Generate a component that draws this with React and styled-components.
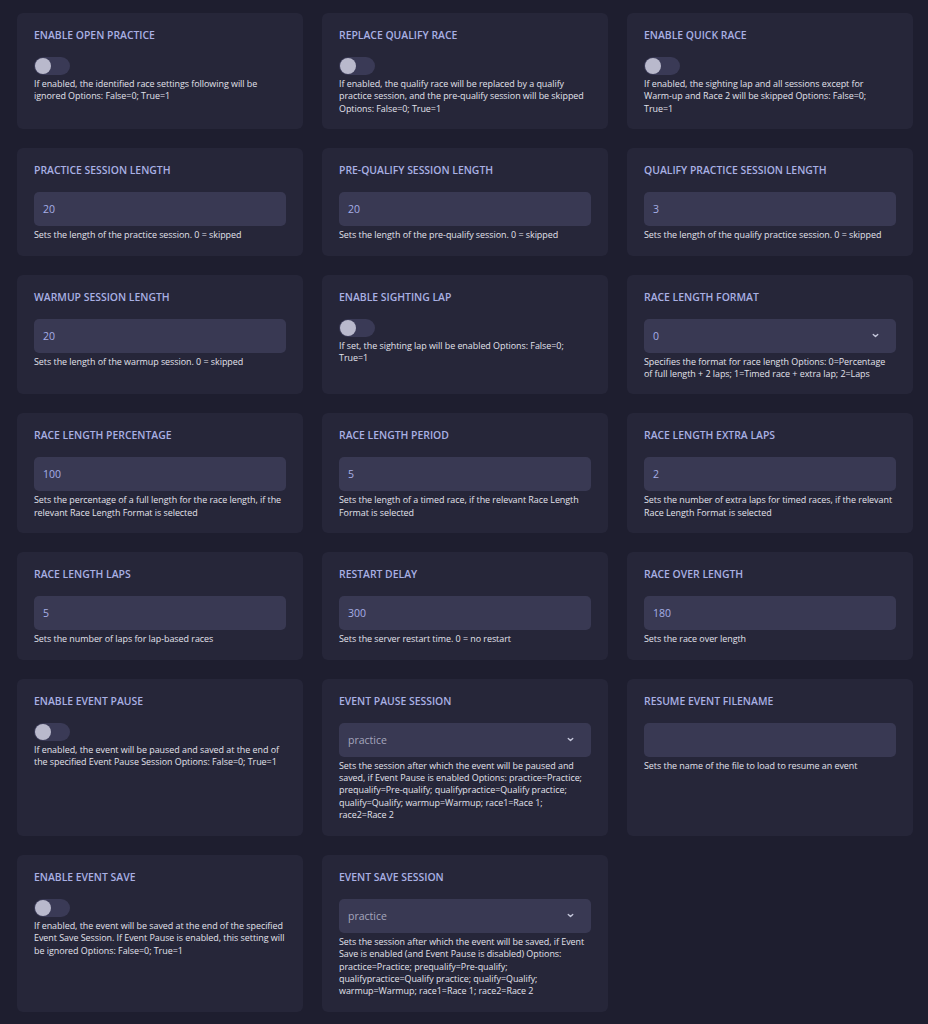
import React from "react";
import { styled, createGlobalStyle } from "styled-components";

const GlobalStyle = createGlobalStyle`
  html, body {
    margin: 0;
    padding: 0;
    background: #1e1e2f;
  }
  body {
    font-family: "Open Sans", "Noto Sans", sans-serif;
  }
`;

const NoWrap = styled.span`
  white-space: nowrap;
`;

const settings = [
  {
    type: "toggle",
    label: "Enable Open Practice",
    desc: "If enabled, the identified race settings following will be ignored Options: False=0; True=1",
  },
  {
    type: "toggle",
    label: "Replace Qualify Race",
    desc: "If enabled, the qualify race will be replaced by a qualify practice session, and the pre-qualify session will be skipped Options: False=0; True=1",
  },
  {
    type: "toggle",
    label: "Enable Quick Race",
    desc: (
      <>
        If enabled, the sighting lap and all sessions except for{" "}
        <NoWrap>Warm-up and</NoWrap> Race 2 will be skipped Options: False=0;
        True=1
      </>
    ),
  },
  {
    type: "input",
    label: "Practice Session Length",
    value: "20",
    desc: "Sets the length of the practice session. 0 = skipped",
  },
  {
    type: "input",
    label: "Pre-Qualify Session Length",
    value: "20",
    desc: "Sets the length of the pre-qualify session. 0 = skipped",
  },
  {
    type: "input",
    label: "Qualify Practice Session Length",
    value: "3",
    desc: "Sets the length of the qualify practice session. 0 = skipped",
  },
  {
    type: "input",
    label: "Warmup Session Length",
    value: "20",
    desc: "Sets the length of the warmup session. 0 = skipped",
  },
  {
    type: "toggle",
    label: "Enable Sighting Lap",
    desc: "If set, the sighting lap will be enabled Options: False=0; True=1",
  },
  {
    type: "select",
    label: "Race Length Format",
    value: "0",
    desc: (
      <>
        Specifies the format for race length Options: 0=Percentage{" "}
        <NoWrap>of full</NoWrap> length + 2 laps; 1=Timed race + extra lap;
        2=Laps
      </>
    ),
  },
  {
    type: "input",
    label: "Race Length Percentage",
    value: "100",
    desc: "Sets the percentage of a full length for the race length, if the relevant Race Length Format is selected",
  },
  {
    type: "input",
    label: "Race Length Period",
    value: "5",
    desc: "Sets the length of a timed race, if the relevant Race Length Format is selected",
  },
  {
    type: "input",
    label: "Race Length Extra Laps",
    value: "2",
    desc: "Sets the number of extra laps for timed races, if the relevant Race Length Format is selected",
  },
  {
    type: "input",
    label: "Race Length Laps",
    value: "5",
    desc: "Sets the number of laps for lap-based races",
  },
  {
    type: "input",
    label: "Restart Delay",
    value: "300",
    desc: "Sets the server restart time. 0 = no restart",
  },
  {
    type: "input",
    label: "Race Over Length",
    value: "180",
    desc: "Sets the race over length",
  },
  {
    type: "toggle",
    label: "Enable Event Pause",
    desc: "If enabled, the event will be paused and saved at the end of the specified Event Pause Session Options: False=0; True=1",
  },
  {
    type: "select",
    label: "Event Pause Session",
    value: "practice",
    muted: true,
    desc: "Sets the session after which the event will be paused and saved, if Event Pause is enabled Options: practice=Practice; prequalify=Pre-qualify; qualifypractice=Qualify practice; qualify=Qualify; warmup=Warmup; race1=Race 1; race2=Race 2",
  },
  {
    type: "input",
    label: "Resume Event Filename",
    value: "",
    desc: "Sets the name of the file to load to resume an event",
  },
  {
    type: "toggle",
    label: "Enable Event Save",
    desc: "If enabled, the event will be saved at the end of the specified Event Save Session. If Event Pause is enabled, this setting will be ignored Options: False=0; True=1",
  },
  {
    type: "select",
    label: "Event Save Session",
    value: "practice",
    muted: true,
    desc: "Sets the session after which the event will be saved, if Event Save is enabled (and Event Pause is disabled) Options: practice=Practice; prequalify=Pre-qualify; qualifypractice=Qualify practice; qualify=Qualify; warmup=Warmup; race1=Race 1; race2=Race 2",
  },
];

const Chevron = () => (
  <svg width="9" height="9" viewBox="0 0 10 10" fill="none">
    <path
      d="M2.5 3.8 L5 6.2 L7.5 3.8"
      stroke="#c6c8dc"
      strokeWidth="1.5"
      strokeLinecap="round"
      strokeLinejoin="round"
    />
  </svg>
);

const Control = ({ item }) => {
  if (item.type === "toggle") {
    return (
      <Toggle>
        <Knob />
      </Toggle>
    );
  }
  if (item.type === "select") {
    return (
      <Field>
        <Value $muted={item.muted}>{item.value}</Value>
        <Chevron />
      </Field>
    );
  }
  return (
    <Field>
      <Value>{item.value}</Value>
    </Field>
  );
};

const App = () => {
  return (
    <>
      <GlobalStyle />
      <Page>
        {settings.map((item) => (
          <Card key={item.label}>
            <Label>{item.label}</Label>
            <Control item={item} />
            <Desc>{item.desc}</Desc>
          </Card>
        ))}
      </Page>
    </>
  );
};

const Page = styled.div`
  display: grid;
  grid-template-columns: repeat(3, 286px);
  column-gap: 19px;
  row-gap: 19px;
  padding: 13px 15px 12px 17px;
`;

const Card = styled.div`
  background: #262639;
  border-radius: 6px;
  padding: 16px 17px 14px 17px;
  display: flex;
  flex-direction: column;
  align-items: flex-start;
`;

const Label = styled.div`
  font-size: 10.4px;
  font-weight: 600;
  line-height: 13px;
  text-transform: uppercase;
  color: #a9b0e4;
  margin-bottom: 15px;
`;

const Toggle = styled.div`
  width: 36px;
  height: 18px;
  border-radius: 9px;
  background: #3a3a56;
  display: flex;
  align-items: center;
  padding: 0 1px;
  box-sizing: border-box;
  margin-bottom: 3px;
`;

const Knob = styled.div`
  width: 16px;
  height: 16px;
  border-radius: 50%;
  background: #b9b9cc;
`;

const Field = styled.div`
  align-self: stretch;
  height: 34px;
  border-radius: 5px;
  background: #393953;
  display: flex;
  align-items: center;
  justify-content: space-between;
  padding: 0 16px 0 9px;
  margin-bottom: 3px;
`;

const Value = styled.span`
  font-size: 10.5px;
  color: ${(p) => (p.$muted ? "#a5a6bd" : "#a7afe6")};
`;

const Desc = styled.div`
  font-size: 8.95px;
  line-height: 12.4px;
  letter-spacing: -0.04px;
  color: #e2e2ec;
`;

export default App;
